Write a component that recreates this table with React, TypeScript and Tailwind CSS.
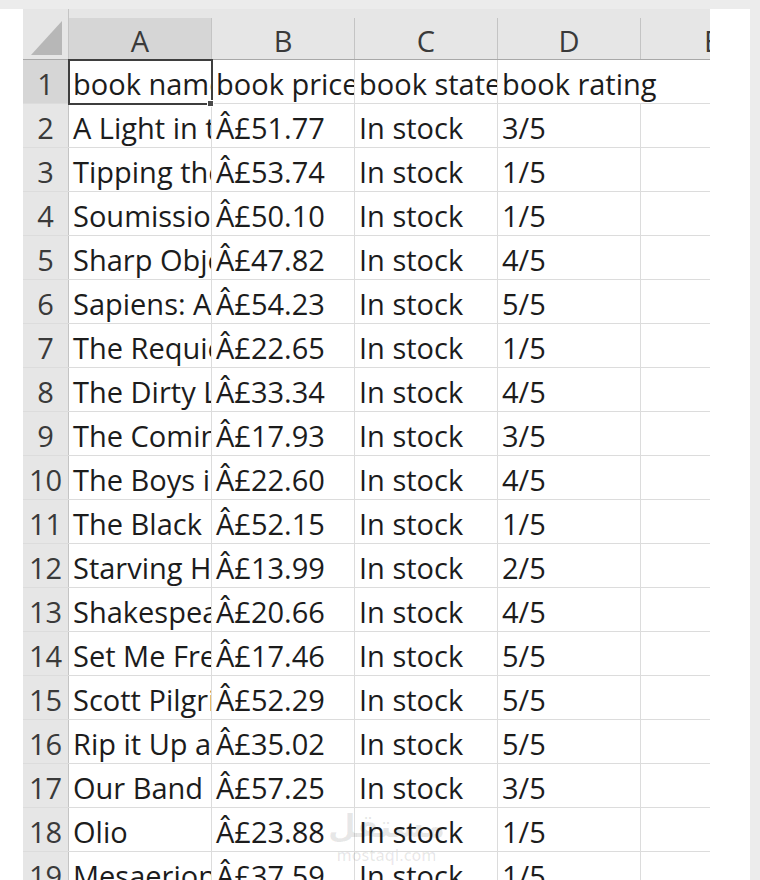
const columns = ['A', 'B', 'C', 'D', 'E']

const rows: [string, string, string, string][] = [
	['book name', 'book price', 'book state', 'book rating'],
	['A Light in the Attic', 'Â£51.77', 'In stock', '3/5'],
	['Tipping the Velvet', 'Â£53.74', 'In stock', '1/5'],
	['Soumission', 'Â£50.10', 'In stock', '1/5'],
	['Sharp Objects', 'Â£47.82', 'In stock', '4/5'],
	['Sapiens: A Brief History of Humankind', 'Â£54.23', 'In stock', '5/5'],
	['The Requiem Red', 'Â£22.65', 'In stock', '1/5'],
	['The Dirty Little Secrets of Getting Your Dream Job', 'Â£33.34', 'In stock', '4/5'],
	['The Coming Woman', 'Â£17.93', 'In stock', '3/5'],
	['The Boys in the Boat', 'Â£22.60', 'In stock', '4/5'],
	['The Black Maria', 'Â£52.15', 'In stock', '1/5'],
	['Starving Hearts (Triangular Trade Trilogy, #1)', 'Â£13.99', 'In stock', '2/5'],
	["Shakespeare's Sonnets", 'Â£20.66', 'In stock', '4/5'],
	['Set Me Free', 'Â£17.46', 'In stock', '5/5'],
	["Scott Pilgrim's Precious Little Life", 'Â£52.29', 'In stock', '5/5'],
	['Rip it Up and Start Again', 'Â£35.02', 'In stock', '5/5'],
	['Our Band Could Be Your Life', 'Â£57.25', 'In stock', '3/5'],
	['Olio', 'Â£23.88', 'In stock', '1/5'],
	['Mesaerion: The Best Science Fiction Stories 1800-1849', 'Â£37.59', 'In stock', '1/5'],
]

function HeaderRow() {
	return (
		<div className="flex h-[51px] border-b border-[#a8a8a8] bg-[#e6e6e6]">
			<div className="flex h-full w-[46px] shrink-0 items-start justify-end border-r border-[#c4c4c4] pr-[5px] pt-[12px]">
				<svg width="32" height="34" viewBox="0 0 32 34">
					<polygon points="31,0 31,34 0,34" fill="#b7b7b7" />
				</svg>
			</div>
			{columns.map((col, i) => (
				<div
					key={col}
					className={`mt-[9px] h-[41px] w-[143px] shrink-0 border-r border-[#c4c4c4] pt-[5px] text-center leading-[36px] text-[#3a3a3a] ${
						i === 0 ? 'bg-[#d6d6d6]' : ''
					}`}
				>
					{col}
				</div>
			))}
		</div>
	)
}

function DataRow({ index, cells }: { index: number; cells: string[] }) {
	const isHeader = index === 1
	return (
		<div className="flex h-[44px] shrink-0 border-b border-[#dcdcdc]">
			<div
				className={`h-full w-[46px] shrink-0 border-r border-[#c4c4c4] pt-[4px] text-center leading-[40px] text-[#3a3a3a] ${
					isHeader ? 'bg-[#d6d6d6]' : 'bg-[#e6e6e6]'
				}`}
			>
				{index}
			</div>
			{cells.map((text, i) => {
				const spills = isHeader && i === 3
				return (
					<div
						key={i}
						className={`h-full w-[143px] shrink-0 whitespace-nowrap pl-[4px] pt-[4px] leading-[40px] text-[#1c1c1c] ${
							spills ? 'overflow-visible' : 'overflow-hidden border-r border-[#dcdcdc]'
						}`}
					>
						{text}
					</div>
				)
			})}
			<div className="h-full w-[143px] shrink-0 border-r border-[#dcdcdc]" />
		</div>
	)
}

export default function App() {
	return (
		<div
			className="relative h-[880px] w-[760px] overflow-hidden bg-[#ececec] text-[29px]"
			style={{ fontFamily: '"Open Sans", "Noto Sans", sans-serif' }}
		>
			<div className="mt-[9px] h-[871px] w-[750px] bg-white pl-[23px]">
				<div className="relative h-full w-[687px] overflow-hidden">
					<HeaderRow />
					{rows.map((cells, i) => (
						<DataRow key={i} index={i + 1} cells={cells} />
					))}
					<div className="pointer-events-none absolute left-[45px] top-[50px] h-[46px] w-[145px] border-2 border-[#3e3e3e]" />
					<div className="pointer-events-none absolute left-[184px] top-[91px] h-[7px] w-[7px] border border-white bg-[#4a4a4a]" />
				</div>
			</div>
			<div className="pointer-events-none absolute left-[328px] top-[806px] flex flex-col items-center text-[rgba(0,0,0,0.09)]">
				<span
					className="text-[32px] font-bold leading-[40px]"
					style={{ fontFamily: '"DejaVu Sans", sans-serif' }}
				>
					مستقل
				</span>
				<span className="text-[16px] font-semibold leading-[18px]">mostaqi.com</span>
			</div>
		</div>
	)
}
